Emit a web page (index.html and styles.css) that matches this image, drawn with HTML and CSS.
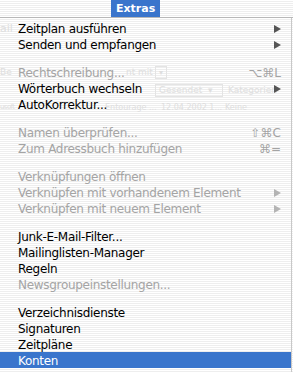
FILE: index.html
```html
<!DOCTYPE html>
<html lang="de">
  <head>
    <meta charset="utf-8">
    <title>Extras</title>
    <link rel="stylesheet" href="styles.css">
  </head>
  <body>
    <!-- window behind the menu, shows through faintly -->
    <div class="ghost">
      <span class="g1">ail</span>
      <span class="g2">Be</span>
      <span class="g3">nt mit</span>
      <span class="g4 gbox">▾</span>
      <span class="g5 gbox">Gesendet &nbsp;▾</span>
      <span class="g6">Kategorien</span>
      <span class="g7">usoft</span>
      <span class="g8">Entourage ...</span>
      <span class="g9">12.04.2002 1...</span>
      <span class="g10">Keine</span>
    </div>

    <!-- menu bar with the open title -->
    <div class="menubar">
      <span class="menu-title">Extras</span>
    </div>

    <!-- the dropped down menu -->
    <ul class="menu">
      <li class="item"><span>Zeitplan ausführen</span><span class="arrow"></span></li>
      <li class="item"><span>Senden und empfangen</span><span class="arrow"></span></li>
      <li class="sep"></li>
      <li class="item disabled"><span>Rechtschreibung...</span><span class="key">⌥⌘L</span></li>
      <li class="item"><span>Wörterbuch wechseln</span><span class="arrow"></span></li>
      <li class="item"><span>AutoKorrektur...</span></li>
      <li class="sep"></li>
      <li class="item disabled"><span>Namen überprüfen...</span><span class="key">⇧⌘C</span></li>
      <li class="item disabled"><span>Zum Adressbuch hinzufügen</span><span class="key">⌘=</span></li>
      <li class="sep"></li>
      <li class="item disabled"><span>Verknüpfungen öffnen</span></li>
      <li class="item disabled"><span>Verknüpfen mit vorhandenem Element</span><span class="arrow"></span></li>
      <li class="item disabled"><span>Verknüpfen mit neuem Element</span><span class="arrow"></span></li>
      <li class="sep"></li>
      <li class="item"><span>Junk-E-Mail-Filter...</span></li>
      <li class="item"><span>Mailinglisten-Manager</span></li>
      <li class="item"><span>Regeln</span></li>
      <li class="item disabled"><span>Newsgroupeinstellungen...</span></li>
      <li class="sep"></li>
      <li class="item"><span>Verzeichnisdienste</span></li>
      <li class="item"><span>Signaturen</span></li>
      <li class="item"><span>Zeitpläne</span></li>
      <li class="item selected"><span>Konten</span></li>
    </ul>
  </body>
</html>
```

FILE: styles.css
```css
/* Aqua style menu */
body {
    margin: 0;
    width: 293px;
    height: 372px;
    overflow: hidden;
    position: relative;
    font-family: 'DejaVu Sans', 'Verdana', sans-serif;
    font-size: 12px;
    color: #000000;
    background: repeating-linear-gradient(#ffffff 0px, #ffffff 1px, #eeeeee 1px, #eeeeee 2px);
}

/* faint window behind */
.ghost {
    position: absolute;
    top: 0;
    left: 0;
    width: 293px;
    height: 372px;
    font-size: 8px;
    color: #dedede;
}

.ghost span {
    position: absolute;
    white-space: nowrap;
}

.gbox {
    border: 1px solid #e4e4e4;
    padding: 0 3px;
    line-height: 11px;
}

.g1 { left: 0; top: 22px; font-size: 11px; }
.g2 { left: 0; top: 67px; font-size: 9px; }
.g3 { left: 126px; top: 67px; font-size: 9px; }
.g4 { left: 155px; top: 66px; }
.g5 { left: 155px; top: 84px; width: 60px; font-size: 9px; }
.g6 { left: 228px; top: 85px; font-size: 9px; }
.g7 { left: 0; top: 103px; font-size: 7px; letter-spacing: -0.6px; }
.g8 { left: 105px; top: 103px; }
.g9 { left: 161px; top: 103px; }
.g10 { left: 225px; top: 103px; }

.menubar {
    position: relative;
    height: 17px;
    border-bottom: 1px solid #b8b8b8;
    padding-left: 111px;
    display: flex;
}

.menu-title {
    background-color: #3a75cc;
    color: #ffffff;
    font-weight: bold;
    font-size: 11px;
    padding: 0 5px;
    line-height: 18px;
    height: 17px;
}

.menu {
    position: relative;
    list-style: none;
    margin: 0;
    padding: 2px 0 4px 0;
    width: 291px;
    border-right: 1px solid #c8c8c8;
}

.item {
    height: 16px;
    display: flex;
    align-items: center;
    justify-content: space-between;
    padding: 1px 10px 0 18px;
    box-sizing: border-box;
    letter-spacing: -0.3px;
}

.disabled {
    color: #a4a4a4;
}

.selected {
    background-color: #3a75cc;
    color: #ffffff;
}

.sep {
    height: 12px;
}

.key {
    font-size: 12px;
    letter-spacing: 0;
    color: #a4a4a4;
}

.arrow {
    width: 0;
    height: 0;
    border-top: 4px solid transparent;
    border-bottom: 4px solid transparent;
    border-left: 7px solid #555555;
}

.disabled .arrow {
    border-left-color: #b4b4b4;
}
```
